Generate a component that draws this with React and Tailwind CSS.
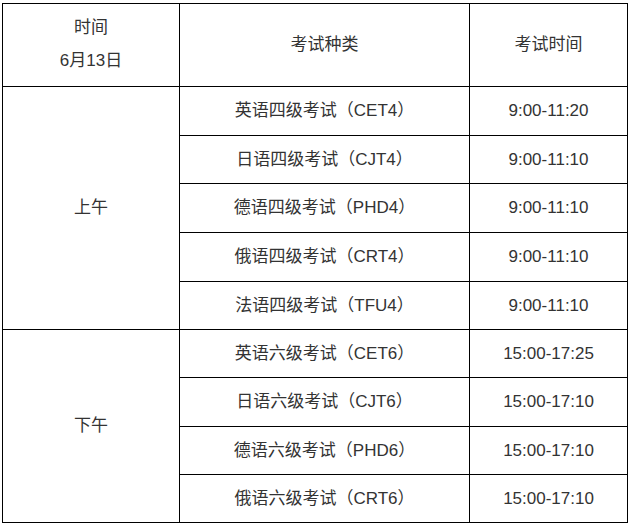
export default function App() {
  const morning = [
    ["英语四级考试（CET4）", "9:00-11:20"],
    ["日语四级考试（CJT4）", "9:00-11:10"],
    ["德语四级考试（PHD4）", "9:00-11:10"],
    ["俄语四级考试（CRT4）", "9:00-11:10"],
    ["法语四级考试（TFU4）", "9:00-11:10"],
  ];
  const afternoon = [
    ["英语六级考试（CET6）", "15:00-17:25"],
    ["日语六级考试（CJT6）", "15:00-17:10"],
    ["德语六级考试（PHD6）", "15:00-17:10"],
    ["俄语六级考试（CRT6）", "15:00-17:10"],
  ];
  const cell = "bg-white flex items-center justify-center";
  return (
    <div
      className="w-[630px] h-[526px] bg-white pt-[3px] pl-[2px] text-[17px] text-[#333333]"
      style={{ fontFamily: '"Liberation Sans", "Noto Sans CJK SC", sans-serif' }}
    >
      <div className="grid w-[626px] bg-black gap-px p-px grid-cols-[176px_289px_157px] grid-rows-[82px_48px_47px_48px_48px_47px_47px_48px_47px_47px]">
        <div className={cell + " flex-col leading-[33px] pb-[2px]"}>
          <div>时间</div>
          <div>6月13日</div>
        </div>
        <div className={cell}>考试种类</div>
        <div className={cell}>考试时间</div>
        <div className={cell + " row-span-5"}>上午</div>
        {morning.map(([a, b], i) => (
          <div key={"m" + i} className="contents">
            <div className={cell + " col-start-2"}>{a}</div>
            <div className={cell}>{b}</div>
          </div>
        ))}
        <div className={cell + " row-span-4 col-start-1"}>下午</div>
        {afternoon.map(([a, b], i) => (
          <div key={"a" + i} className="contents">
            <div className={cell + " col-start-2"}>{a}</div>
            <div className={cell}>{b}</div>
          </div>
        ))}
      </div>
    </div>
  );
}
